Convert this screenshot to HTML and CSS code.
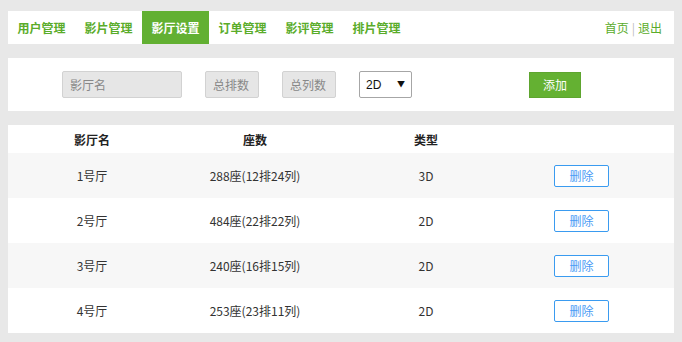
FILE: index.html
```html
<!DOCTYPE html>
<html lang="zh">
<head>
    <meta charset="UTF-8">
    <title>影厅设置</title>
    <link rel="stylesheet" href="styles.css">
</head>
<body>
    <div class="nav">
        <ul class="nav-tabs">
            <li><a href="#">用户管理</a></li>
            <li><a href="#">影片管理</a></li>
            <li class="active"><a href="#">影厅设置</a></li>
            <li><a href="#">订单管理</a></li>
            <li><a href="#">影评管理</a></li>
            <li><a href="#">排片管理</a></li>
        </ul>
        <div class="nav-links">
            <a href="#">首页</a><span class="sep">|</span><a href="#">退出</a>
        </div>
    </div>

    <form class="add-form" onsubmit="return false">
        <input type="text" class="field field-name" placeholder="影厅名">
        <input type="text" class="field field-small" placeholder="总排数">
        <input type="text" class="field field-small" placeholder="总列数">
        <span class="select-wrap">
            <select class="type-select">
                <option>2D</option>
                <option>3D</option>
            </select>
        </span>
        <button type="submit" class="add-button">添加</button>
    </form>

    <div class="list">
        <table>
            <thead>
                <tr>
                    <th class="col-name">影厅名</th>
                    <th class="col-seats">座数</th>
                    <th class="col-type">类型</th>
                    <th class="col-action"></th>
                </tr>
            </thead>
            <tbody>
                <tr>
                    <td>1号厅</td>
                    <td>288座(12排24列)</td>
                    <td>3D</td>
                    <td class="col-action"><button class="del-button">删除</button></td>
                </tr>
                <tr>
                    <td>2号厅</td>
                    <td>484座(22排22列)</td>
                    <td>2D</td>
                    <td class="col-action"><button class="del-button">删除</button></td>
                </tr>
                <tr>
                    <td>3号厅</td>
                    <td>240座(16排15列)</td>
                    <td>2D</td>
                    <td class="col-action"><button class="del-button">删除</button></td>
                </tr>
                <tr>
                    <td>4号厅</td>
                    <td>253座(23排11列)</td>
                    <td>2D</td>
                    <td class="col-action"><button class="del-button">删除</button></td>
                </tr>
            </tbody>
        </table>
    </div>
</body>
</html>
```

FILE: styles.css
```css
body {
    margin: 11px 8px 0;
    background-color: #e8e8e8;
    font-family: "Microsoft YaHei", "Noto Sans CJK SC", sans-serif;
    font-size: 12px;
    color: #333;
}

a {
    text-decoration: none;
}

.nav {
    width: 667px;
    height: 33px;
    background-color: #fff;
    display: flex;
    justify-content: space-between;
    align-items: center;
}

.nav-tabs {
    list-style: none;
    margin: 0;
    padding: 0;
    display: flex;
    height: 100%;
}

.nav-tabs li {
    width: 67px;
    display: flex;
    align-items: center;
    justify-content: center;
}

.nav-tabs a {
    color: #5aac2a;
    font-weight: bold;
}

.nav-tabs li.active {
    background-color: #62b032;
}

.nav-tabs li.active a {
    color: #fff;
}

.nav-links {
    padding-right: 13px;
}

.nav-links a {
    color: #5aac2a;
}

.nav-links .sep {
    color: #bbb;
    margin: 0 3px;
}

.add-form {
    width: 667px;
    height: 53px;
    margin-top: 14px;
    background-color: #fff;
    display: flex;
    align-items: center;
    box-sizing: border-box;
    padding-left: 54px;
}

.field {
    height: 27px;
    box-sizing: border-box;
    border: 1px solid #d2d2d2;
    border-radius: 2px;
    background-color: #e6e6e6;
    padding: 0 7px;
    font-family: inherit;
    font-size: 12px;
    color: #333;
    outline: none;
}

.field::placeholder {
    color: #888;
}

.field-name {
    width: 120px;
}

.field-small {
    width: 54px;
    margin-left: 23px;
}

.select-wrap {
    position: relative;
    margin-left: 23px;
}

.type-select {
    -webkit-appearance: none;
    appearance: none;
    width: 53px;
    height: 27px;
    box-sizing: border-box;
    border: 1px solid #a6a6a6;
    border-radius: 2px;
    background-color: #fff;
    padding: 0 6px;
    font-family: "Liberation Sans", Arial, sans-serif;
    font-size: 12px;
    color: #111;
}

.select-wrap::after {
    content: "\25BC";
    position: absolute;
    right: 7px;
    top: 7px;
    font-size: 8px;
    color: #111;
    pointer-events: none;
}

.add-button {
    margin-left: 117px;
    width: 52px;
    height: 26px;
    border: 1px solid #5ea52f;
    background-color: #64b132;
    color: #fff;
    font-family: inherit;
    font-size: 12px;
    cursor: pointer;
}

.list {
    width: 667px;
    margin-top: 14px;
    background-color: #fff;
}

table {
    width: 100%;
    border-collapse: collapse;
    table-layout: fixed;
}

th, td {
    padding: 0;
    text-align: center;
}

th {
    height: 28px;
    font-weight: bold;
    color: #222;
}

td {
    height: 45px;
}

tbody tr:nth-child(odd) {
    background-color: #f7f7f7;
}

.col-name {
    width: 168px;
}

.col-seats {
    width: 158px;
}

.col-type {
    width: 184px;
}

.col-action {
    text-align: left;
    padding-left: 36px;
}

.del-button {
    width: 55px;
    height: 22px;
    border: 1px solid #3a9bf0;
    border-radius: 2px;
    background-color: #fff;
    color: #4a9bf5;
    font-family: inherit;
    font-size: 12px;
    cursor: pointer;
    vertical-align: middle;
}
```
